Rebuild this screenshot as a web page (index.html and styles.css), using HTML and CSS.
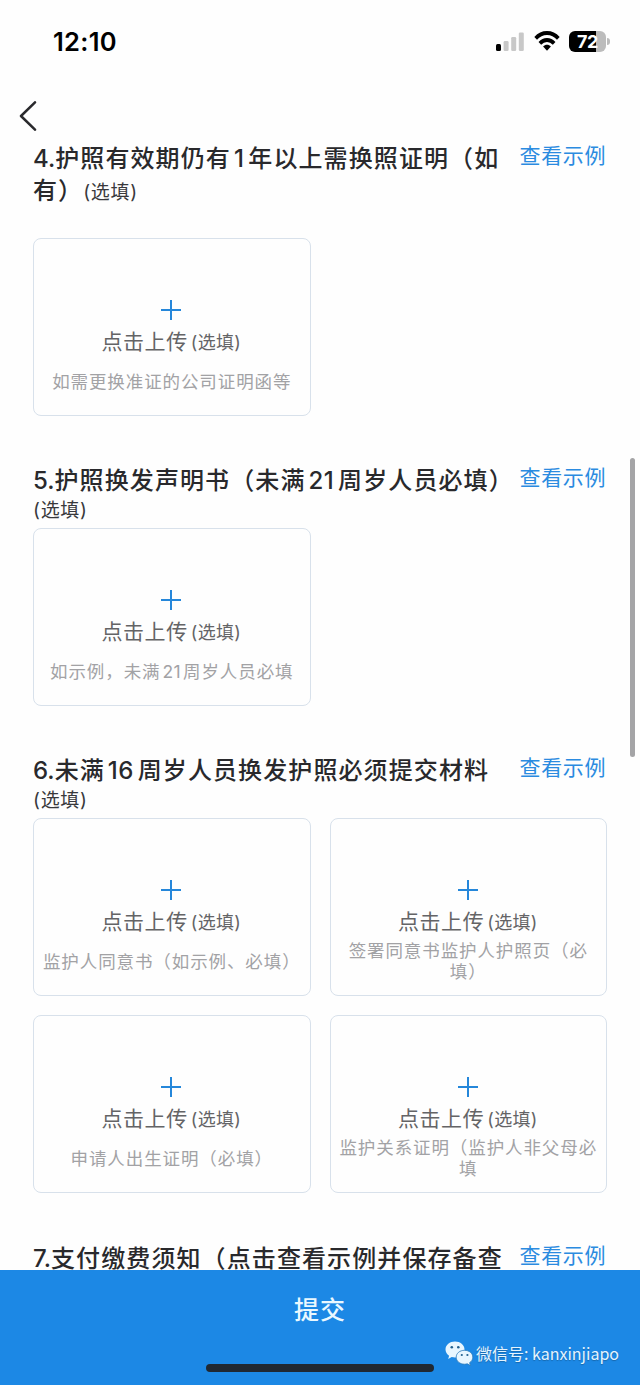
FILE: index.html
```html
<!DOCTYPE html>
<html lang="zh-CN">
<head>
<meta charset="utf-8">
<title>护照换发</title>
<link rel="stylesheet" href="styles.css">
</head>
<body>
<div class="phone">
  <header class="status">
    <span class="clock">12:10</span>
    <div class="indicators">
      <svg class="signal" width="28" height="19" viewBox="0 0 28 19">
        <rect x="0" y="12" width="5" height="7" rx="1.5" fill="#000"/>
        <rect x="7.6" y="9" width="5" height="10" rx="1.3" fill="#c8c8c8"/>
        <rect x="15.2" y="5" width="5" height="14" rx="1.3" fill="#c8c8c8"/>
        <rect x="22.8" y="0.5" width="5" height="18.5" rx="1.3" fill="#c8c8c8"/>
      </svg>
      <svg class="wifi" width="26" height="20" viewBox="0 0 28 20" preserveAspectRatio="none">
        <g fill="none" stroke="#000" stroke-width="4">
          <path d="M1.8 7.4C8.6 0.3 19.4 0.3 26.2 7.4"/>
          <path d="M6.3 12.3C10.7 7.9 17.3 7.9 21.7 12.3"/>
        </g>
        <path d="M9.800 15.500C12.200 13.200 15.800 13.200 18.200 15.500L14 19.700Z"/>
      </svg>
      <div class="battery"><span class="battery-level">72</span><i class="battery-cap"></i></div>
    </div>
  </header>
  <nav class="nav">
    <svg width="18" height="30" viewBox="0 0 18 30"><path d="M16 1.300L2 15L16 28.700" fill="none" stroke="#29292c" stroke-width="2.500" stroke-linecap="round" stroke-linejoin="round"/></svg>
  </nav>
  <main class="content">
    <section class="section s4">
      <div class="head">
        <h2 class="title"><span class="num">4.</span>护照有效期仍有<span class="digits">1</span>年以上需换照证明（如<br>有）<span class="optional inline">(选填)</span></h2>
        <a class="example">查看示例</a>
      </div>
      <div class="grid">
        <div class="card"><i class="plus"></i><p class="upload">点击上传<small>(选填)</small></p><p class="hint"><span>如需更换准证的公司证明函等</span></p></div>
      </div>
    </section>
    <section class="section s5">
      <div class="head">
        <h2 class="title"><span class="num">5.</span>护照换发声明书（未满<span class="digits">21</span>周岁人员必填）</h2>
        <a class="example">查看示例</a>
      </div>
      <p class="optional">(选填)</p>
      <div class="grid">
        <div class="card"><i class="plus"></i><p class="upload">点击上传<small>(选填)</small></p><p class="hint"><span>如示例，未满<span class="digits small">21</span>周岁人员必填</span></p></div>
      </div>
    </section>
    <section class="section s6">
      <div class="head">
        <h2 class="title"><span class="num">6.</span>未满<span class="digits">16</span>周岁人员换发护照必须提交材料</h2>
        <a class="example">查看示例</a>
      </div>
      <p class="optional">(选填)</p>
      <div class="grid">
        <div class="card"><i class="plus"></i><p class="upload">点击上传<small>(选填)</small></p><p class="hint"><span>监护人同意书（如示例、必填）</span></p></div>
        <div class="card"><i class="plus"></i><p class="upload">点击上传<small>(选填)</small></p><p class="hint"><span>签署同意书监护人护照页（必<br>填）</span></p></div>
        <div class="card"><i class="plus"></i><p class="upload">点击上传<small>(选填)</small></p><p class="hint"><span>申请人出生证明（必填）</span></p></div>
        <div class="card"><i class="plus"></i><p class="upload">点击上传<small>(选填)</small></p><p class="hint"><span>监护关系证明（监护人非父母必<br>填</span></p></div>
      </div>
    </section>
    <section class="section">
      <div class="head">
        <h2 class="title"><span class="num">7.</span>支付缴费须知（点击查看示例并保存备查</h2>
        <a class="example">查看示例</a>
      </div>
    </section>
  </main>
  <footer class="submit">
    <span class="submit-label">提交</span>
    <i class="home-bar"></i>
    <div class="watermark">
      <svg width="29" height="25" viewBox="0 0 29 25">
        <path fill="#e8f6ff" d="M10 .5C4.800 .5.500 4 .500 8.500c0 2.600 1.400 4.800 3.600 6.300L3.200 18l3.500-1.900c1.100.3 2.200.5 3.300.5 5.200 0 9.500-3.600 9.500-8.100S15.200.5 10 .5Z"/>
        <path fill="#e8f6ff" stroke="#2878b8" stroke-width=".8" d="M19.500 9.300c-4.700 0-8.300 3-8.300 6.900s3.600 7 8.300 7c1 0 1.900-.1 2.800-.4l3.200 1.800-.9-2.900c2-1.300 3.200-3.200 3.200-5.500 0-3.900-3.600-6.900-8.300-6.900Z"/>
        <g fill="#23618f"><circle cx="6.800" cy="6.200" r="1.300"/><circle cx="13.300" cy="6.200" r="1.300"/><circle cx="16.800" cy="14" r="1.100"/><circle cx="22.400" cy="14" r="1.100"/></g>
      </svg>
      <span>微信号: kanxinjiapo</span>
    </div>
  </footer>
  <i class="scrollbar"></i>
</div>
</body>
</html>
```
FILE: styles.css
```css
* { box-sizing: border-box; }
body { margin: 0; background: #fefefe; font-family: Inter, "Noto Sans CJK SC", sans-serif; }
h2, p { margin: 0; font-weight: 400; }
i { display: block; }
svg { display: block; }

.phone { position: relative; width: 640px; height: 1385px; overflow: hidden; display: flex; flex-direction: column; }

.status { height: 82px; flex: none; display: flex; justify-content: space-between; align-items: center; padding: 0 34px 0 53px; }
.clock { font-size: 25.500px; font-weight: 600; letter-spacing: .3px; color: #000; }
.indicators { display: flex; align-items: center; }
.wifi { margin: 0 9px 0 10px; }
.battery { position: relative; width: 37px; height: 21px; border-radius: 6px; background: linear-gradient(90deg, #000 27px, #bcbcbc 27px); text-align: center; }
.battery-level { display: block; color: #fff; font-size: 18px; font-weight: 700; line-height: 21px; letter-spacing: -.4px; }
.battery-cap { position: absolute; left: 38px; top: 7px; width: 2.5px; height: 7px; border-radius: 0 3px 3px 0; background: #bcbcbc; }

.nav { height: 60px; flex: none; padding: 19px 0 0 19px; }

.content { flex: 1; min-height: 0; overflow: hidden; padding: 1px 33px 0; }
.s4 { height: 322px; }
.s5 { height: 290px; }
.s6 { height: 488px; }
.head { display: flex; justify-content: space-between; align-items: flex-start; }
.title { font-size: 24px; font-weight: 500; line-height: 32px; letter-spacing: 1.1px; color: #29292c; white-space: nowrap; }
.num { letter-spacing: 0; }
.digits { margin: 0 4px 0 3px; letter-spacing: .4px; }
.digits.small { margin: 0 2px; }
.example { margin-right: 1px; font-size: 21px; line-height: 26px; letter-spacing: .6px; color: #2b8be0; white-space: nowrap; }
.optional { font-size: 19px; line-height: 28px; font-weight: 400; letter-spacing: .7px; color: #39393c; }
.s4 .grid { margin-top: 31px; }
.s5 .grid, .s6 .grid { margin-top: 3px; }
.grid { display: grid; grid-template-columns: 277.500px 277.500px; gap: 19px; }

.card { height: 178px; border: 1.500px solid #d8e1eb; border-radius: 8px; display: flex; flex-direction: column; align-items: center; padding-top: 61px; text-align: center; white-space: nowrap; }
.plus { flex: none; width: 20px; height: 20px; margin-right: 1px; background: linear-gradient(#2587da, #2587da) center / 20px 2px no-repeat, linear-gradient(#2587da, #2587da) center / 2px 20px no-repeat; }
.upload { margin: 7px 1px 0 0; height: 30px; line-height: 30px; font-size: 21px; letter-spacing: .6px; color: #646466; }
.upload small { margin-left: 3px; font-size: 18px; letter-spacing: .3px; }
.hint { height: 48px; display: flex; align-items: center; font-size: 17.500px; line-height: 21px; letter-spacing: .9px; color: #a2a2a5; }

.submit { position: relative; flex: none; height: 115px; background: #1c88e5; display: flex; flex-direction: column; align-items: center; }
.submit-label { margin-top: 21px; line-height: 38px; font-size: 25px; font-weight: 500; letter-spacing: 1px; color: #eaf8ff; }
.home-bar { width: 228px; height: 8px; margin-top: 35px; border-radius: 4px; background: #202832; }
.watermark { position: absolute; left: 445px; top: 71px; display: flex; gap: 2px; line-height: 25px; font-family: "Noto Sans CJK SC", sans-serif; font-size: 16px; color: #e4f4ff; white-space: nowrap; text-shadow: 0 1px 1px #1768ad; }
.scrollbar { position: absolute; left: 630px; top: 458px; width: 5px; height: 299px; border-radius: 3px; background: #a4a4a6; }
```
